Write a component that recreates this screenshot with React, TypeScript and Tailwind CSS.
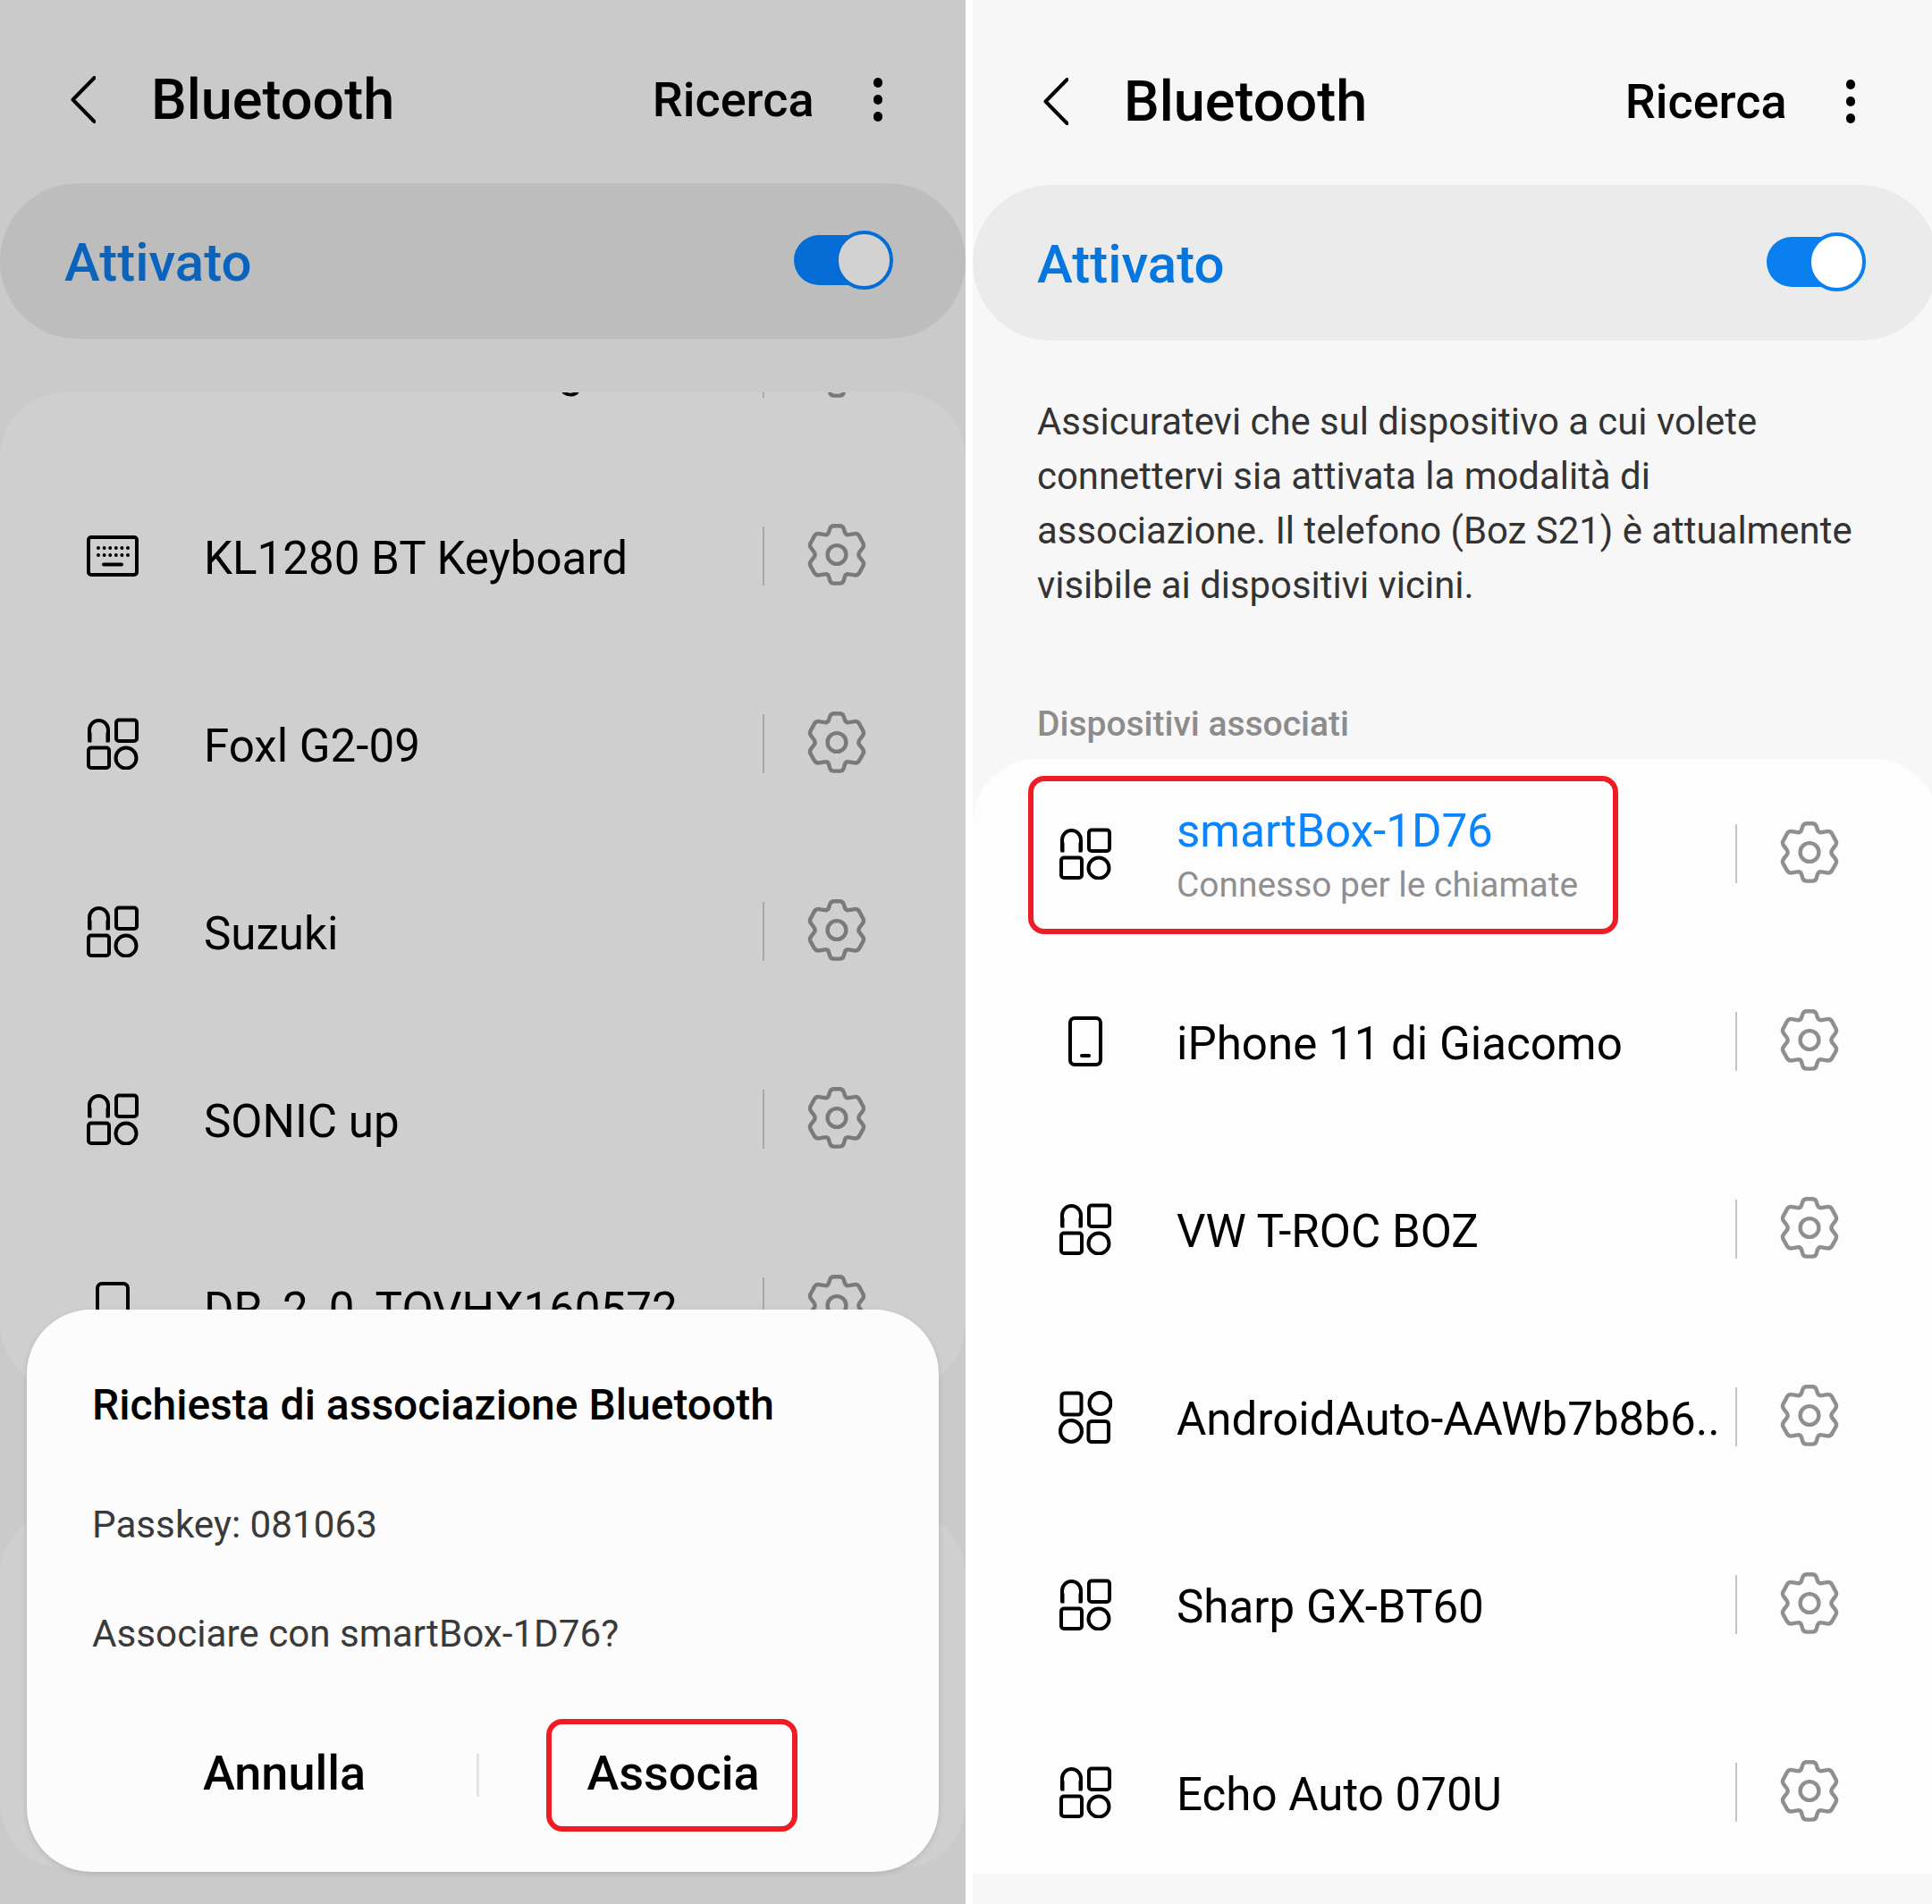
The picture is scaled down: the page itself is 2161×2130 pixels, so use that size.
import React from "react";

const gearPts: [number, number][] = [
  [26.3, 2.2], [39.7, 2.2], [43, 12.7], [56.3, 10.5], [64, 24.3], [56.3, 34.4], [64, 44.5], [56.3, 58],
  [43, 55.8], [39.7, 66.6], [26.3, 66.6], [23, 55.8], [9.7, 58], [2, 44.5], [9.7, 34.4], [2, 24.3], [9.7, 10.5], [23, 12.7],
];
function roundedPath(pts: [number, number][], r: number) {
  const n = pts.length;
  let d = "";
  pts.forEach((p, i) => {
    const a = pts[(i - 1 + n) % n];
    const b = pts[(i + 1) % n];
    const la = Math.hypot(a[0] - p[0], a[1] - p[1]);
    const lb = Math.hypot(b[0] - p[0], b[1] - p[1]);
    const s = [p[0] + ((a[0] - p[0]) * r) / la, p[1] + ((a[1] - p[1]) * r) / la];
    const e = [p[0] + ((b[0] - p[0]) * r) / lb, p[1] + ((b[1] - p[1]) * r) / lb];
    d += `${i === 0 ? "M" : "L"}${s[0].toFixed(1)} ${s[1].toFixed(1)}Q${p[0]} ${p[1]} ${e[0].toFixed(1)} ${e[1].toFixed(1)}`;
  });
  return d + "Z";
}
const gearD = roundedPath(gearPts, 3.6);

function Gear({ dim }: { dim: boolean }) {
  return (
    <svg viewBox="0 0 66 69" className={dim ? "w-[66px] h-[69px] text-[#7a7a7a]" : "w-[66px] h-[69px] text-[#8f8f8f]"} fill="none" stroke="currentColor" strokeWidth="4.4" strokeLinejoin="round">
      <path d={gearD} />
      <circle cx="33" cy="34.5" r="10.4" />
    </svg>
  );
}

function Headset() {
  return (
    <svg viewBox="0 0 58 58" className="w-[58px] h-[58px]" fill="none" stroke="black" strokeWidth="4">
      <path d="M3 25V13.5a10.5 10.5 0 0 1 21 0V25" strokeLinecap="round" />
      <rect x="3" y="18" width="1" height="8" strokeWidth="3" />
      <rect x="23" y="18" width="1" height="8" strokeWidth="3" />
      <rect x="33" y="2.5" width="23" height="23.5" rx="3" />
      <rect x="2" y="33.5" width="23" height="22.5" rx="3" />
      <circle cx="44" cy="45" r="11.5" />
    </svg>
  );
}

function Android() {
  return (
    <svg viewBox="0 0 60 59" className="w-[60px] h-[59px] -mx-[1px]" fill="none" stroke="black" strokeWidth="4">
      <rect x="3.5" y="2.5" width="22" height="24" rx="3.5" />
      <circle cx="46.5" cy="14" r="12" />
      <circle cx="14" cy="45" r="12" />
      <rect x="33.5" y="34" width="22.5" height="23" rx="3.5" />
    </svg>
  );
}

function Keyboard() {
  const xs = [13, 19.6, 26.2, 32.8, 39.4, 46];
  return (
    <svg viewBox="0 0 58 46" className="w-[58px] h-[46px]" fill="none" stroke="black" strokeWidth="4">
      <rect x="2" y="2" width="54" height="42" rx="3" />
      {xs.map((x) => (
        <circle key={"a" + x} cx={x} cy="14" r="2" fill="black" stroke="none" />
      ))}
      {xs.map((x) => (
        <circle key={"b" + x} cx={x} cy="22" r="2" fill="black" stroke="none" />
      ))}
      <path d="M19 32.5h20" strokeLinecap="round" />
    </svg>
  );
}

function Phone() {
  return (
    <svg viewBox="0 0 38 56" className="w-[38px] h-[56px]" fill="none" stroke="black" strokeWidth="4">
      <rect x="2" y="2" width="34" height="52" rx="5" />
      <path d="M15 44h8" strokeWidth="4" strokeLinecap="round" />
    </svg>
  );
}

type Kind = "head" | "android" | "key" | "phone";
function DevIcon({ kind }: { kind: Kind }) {
  return (
    <div className="w-[58px] h-[60px] flex items-center justify-center shrink-0">
      {kind === "head" && <Headset />}
      {kind === "android" && <Android />}
      {kind === "key" && <Keyboard />}
      {kind === "phone" && <Phone />}
    </div>
  );
}

function Row({ kind, name, dim, children }: { kind: Kind; name?: string; dim: boolean; children?: React.ReactNode }) {
  return (
    <div className="relative flex items-center h-[210px] pl-[97px]">
      <DevIcon kind={kind} />
      <div className="ml-[73px] w-[625px] shrink-0 overflow-hidden whitespace-nowrap">
        {children ?? <div className="text-[51.1px] leading-[66px] text-black pt-[5px]">{name}</div>}
      </div>
      <div className={dim ? "w-[2px] h-[66px] bg-[#a8a8a8] shrink-0" : "w-[2px] h-[66px] bg-[#c4c4c4] shrink-0"} />
      <div className="ml-[48px] -mt-[3px] shrink-0">
        <Gear dim={dim} />
      </div>
    </div>
  );
}

function Header({ dim }: { dim: boolean }) {
  const bar = dim ? "bg-[#bdbdbd]" : "bg-[#ebebeb]";
  const blue = dim ? "text-[#0a64bd]" : "text-[#0476e0]";
  const track = dim ? "bg-[#056cd6]" : "bg-[#0a7ff0]";
  const thumb = dim ? "bg-[#d2d2d2] border-[#056cd6]" : "bg-white border-[#0a7ff0]";
  return (
    <>
      <div className="h-[205px] flex items-center pt-[18px] pl-[79px] pr-[93px]">
        <svg viewBox="0 0 28 53" className="w-[28px] h-[53px] shrink-0" fill="none" stroke="black" strokeWidth="4" strokeLinecap="round" strokeLinejoin="round">
          <path d="M26.5 2 2.5 26.5 26.5 51" />
        </svg>
        <div className="ml-[62px] text-[63px] font-medium leading-[80px] text-black">Bluetooth</div>
        <div className="ml-auto text-[54px] font-medium leading-[70px] text-black">Ricerca</div>
        <div className="ml-[66px] flex flex-col gap-[8.5px] w-[10.5px]">
          <span className="w-[10.5px] h-[10.5px] rounded-full bg-black" />
          <span className="w-[10.5px] h-[10.5px] rounded-full bg-black" />
          <span className="w-[10.5px] h-[10.5px] rounded-full bg-black" />
        </div>
      </div>
      <div className={`h-[174px] rounded-[87px] flex items-center pl-[72px] pr-[81px] ${bar}`}>
        <div className={`text-[60px] font-medium leading-[80px] pt-[3px] ${blue}`}>Attivato</div>
        <div className="ml-auto relative w-[111px] h-[66px] -mt-[2px] flex items-center">
          <div className={`w-[102px] h-[56px] rounded-full ${track}`} />
          <div className={`absolute right-0 top-0 w-[65px] h-[66px] rounded-full border-[4px] ${thumb}`} />
        </div>
      </div>
    </>
  );
}

function LeftPanel() {
  return (
    <div className="relative w-[1080px] h-[2130px] shrink-0 bg-[#cacaca] overflow-hidden">
      <Header dim />
      <div className="mt-[60px] h-[1114px] rounded-[72px] bg-[#cfcfcf] overflow-hidden">
        <div className="-mt-[132px]">
          <Row kind="key" name="Audi MMI TV Bridge" dim />
          <Row kind="key" name="KL1280 BT Keyboard" dim />
          <Row kind="head" name="Foxl G2-09" dim />
          <Row kind="head" name="Suzuki" dim />
          <Row kind="head" name="SONIC up" dim />
          <Row kind="phone" name="DR_2_0_TOVHX160572" dim />
        </div>
      </div>
      <div className="mt-[137px] h-[400px] rounded-[72px] bg-[#cfcfcf]" />
      <div className="absolute left-[30px] top-[1465px] w-[1020px] h-[629px] rounded-[72px] bg-[#fcfcfc] shadow-[0_2px_6px_rgba(0,0,0,0.12)] pl-[73px] pt-[77px]">
        <div className="text-[48px] font-medium leading-[60px] text-black whitespace-nowrap">Richiesta di associazione Bluetooth</div>
        <div className="mt-[74px] text-[42.2px] leading-[60px] text-[#3a3a3a]">Passkey: 081063</div>
        <div className="mt-[62px] text-[42.2px] leading-[60px] text-[#3a3a3a]">Associare con smartBox-1D76?</div>
        <div className="mt-[65px] flex items-center h-[126px]">
          <div className="w-[430px] text-center text-[54px] font-medium text-black pb-[5px]">Annulla</div>
          <div className="w-[3px] h-[48px] bg-[#e4e4e4]" />
          <div className="ml-[75px] w-[281px] h-[126px] rounded-[18px] border-[6px] border-[#ee1c25] flex items-center justify-center text-[54px] font-medium text-black pb-[5px] pl-[3px]">Associa</div>
        </div>
      </div>
    </div>
  );
}

function RightPanel() {
  return (
    <div className="flex-1 h-[2130px] bg-[#f7f7f7] overflow-hidden pt-[2px]">
      <div className="w-[1080px]">
        <Header dim={false} />
        <div className="pl-[72px] pt-[60px]">
          <p className="text-[41.9px] leading-[61px] text-[#333] w-[960px]">
            Assicuratevi che sul dispositivo a cui volete
            <br />
            connettervi sia attivata la modalità di
            <br />
            associazione. Il telefono (Boz S21) è attualmente
            <br />
            visibile ai dispositivi vicini.
          </p>
          <div className="mt-[100px] text-[39px] font-medium leading-[50px] text-[#8c8c8c]">Dispositivi associati</div>
        </div>
        <div className="mt-[14px] h-[1247px] rounded-t-[72px] bg-[#fdfdfd] overflow-hidden">
          <div className="mt-[1px]">
            <Row kind="head" dim={false}>
              <div className="text-[51.1px] leading-[66px] text-[#0a84ff] mt-[1px]">smartBox-1D76</div>
              <div className="text-[38.9px] leading-[50px] text-[#8f8f8f] mt-[2px]">Connesso per le chiamate</div>
              <div className="absolute left-[62px] top-[18px] w-[660px] h-[177px] rounded-[18px] border-[6px] border-[#ee1c25]" />
            </Row>
            <Row kind="phone" name="iPhone 11 di Giacomo" dim={false} />
            <Row kind="head" name="VW T-ROC BOZ" dim={false} />
            <Row kind="android" name="AndroidAuto-AAWb7b8b6.." dim={false} />
            <Row kind="head" name="Sharp GX-BT60" dim={false} />
            <Row kind="head" name="Echo Auto 070U" dim={false} />
          </div>
        </div>
      </div>
    </div>
  );
}

export default function App() {
  return (
    <div className="w-[2161px] h-[2130px] flex bg-white font-['Roboto',sans-serif] overflow-hidden">
      <LeftPanel />
      <div className="w-[8px] shrink-0 bg-white" />
      <RightPanel />
    </div>
  );
}
